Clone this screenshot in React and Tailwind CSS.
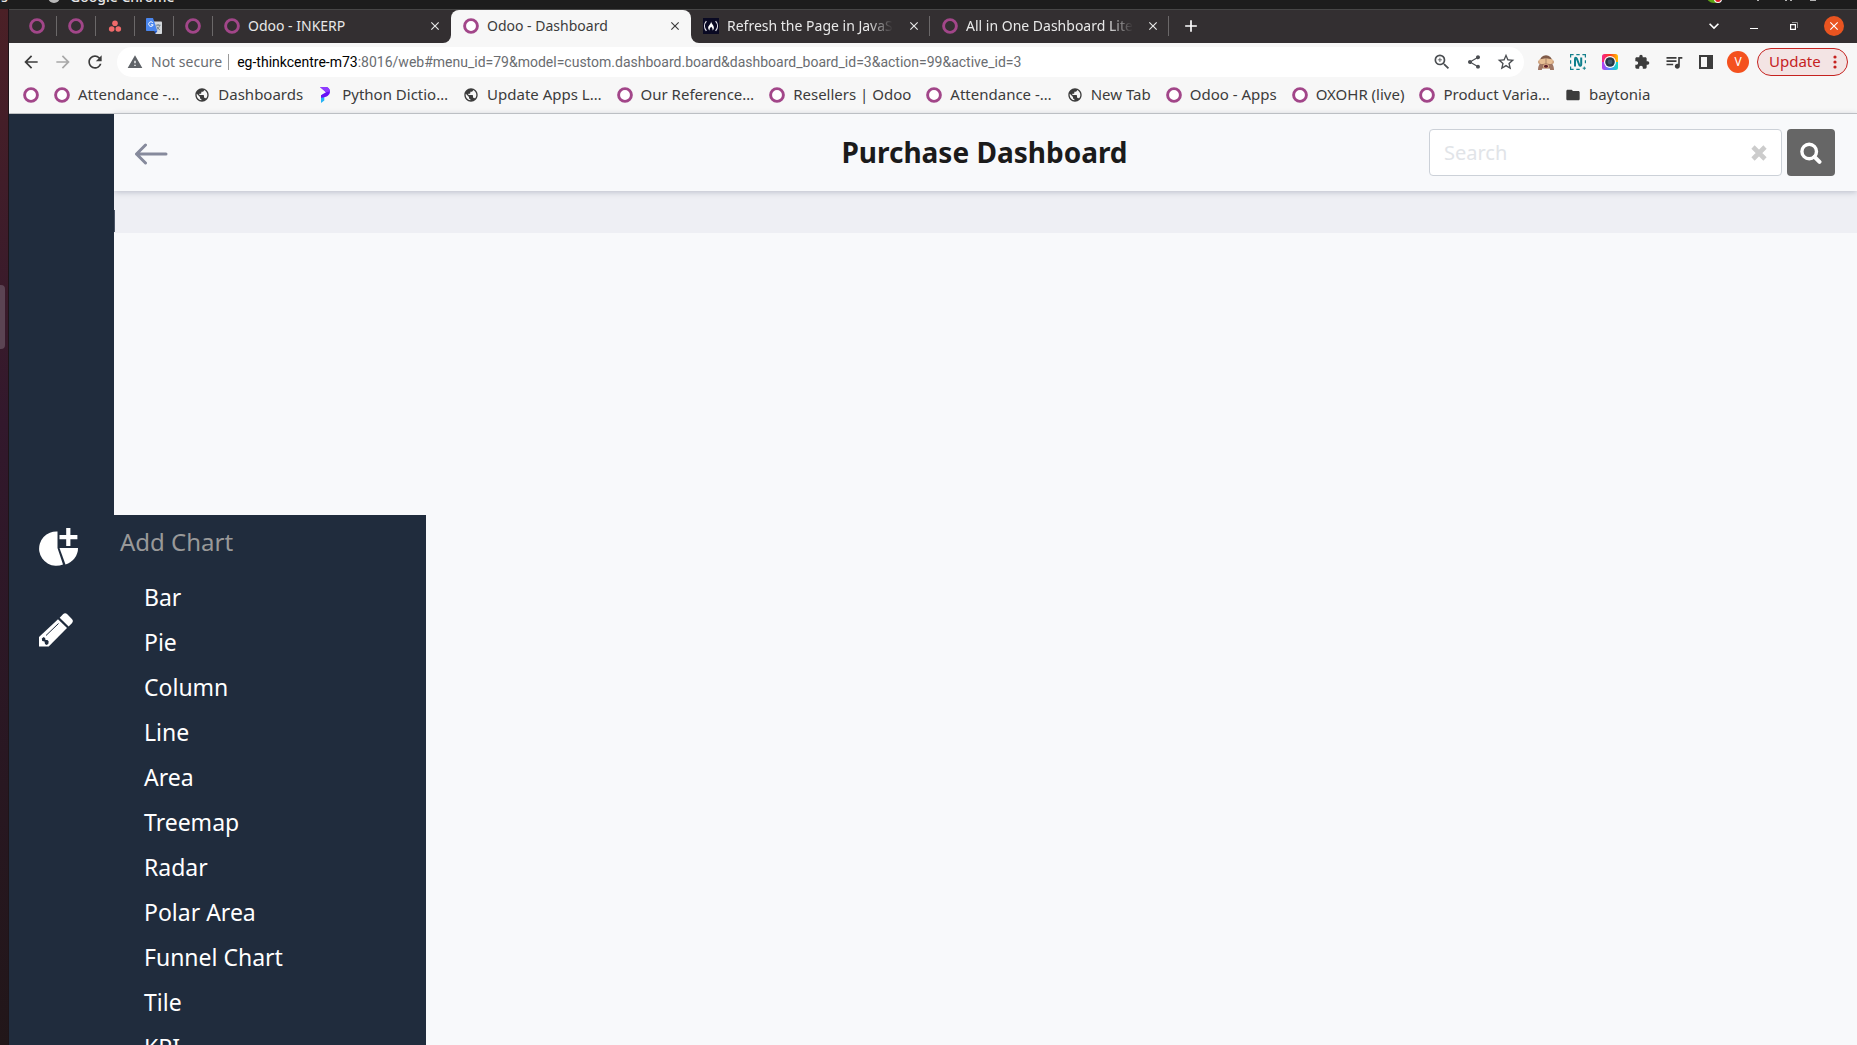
import { MdFolder, MdPublic, MdExtension, MdQueueMusic, MdShare, MdStarBorder, MdZoomIn, MdRefresh, MdArrowBack, MdArrowForward, MdWarning, MdAdd, MdClose, MdExpandMore } from "react-icons/md";

function Ring({ dark }) {
  return (
    <svg viewBox="0 0 16 16" className="size-4 shrink-0" aria-hidden="true">
      <circle cx="8" cy="8" r="6.4" fill={dark ? "none" : "#fff"} stroke="#a24689" strokeWidth="2.9" />
    </svg>
  );
}

function Asana() {
  return (
    <svg viewBox="0 0 16 16" className="size-4 shrink-0" aria-hidden="true">
      <g fill="#f06a6a">
        <circle cx="8" cy="5.2" r="2.8" />
        <circle cx="4.7" cy="11" r="2.8" />
        <circle cx="11.3" cy="11" r="2.8" />
      </g>
    </svg>
  );
}

function Translate() {
  return (
    <svg viewBox="0 0 16 16" className="size-4 shrink-0" aria-hidden="true">
      <path d="M6 3.5h9.200c.5 0 .8.3.8.8v10.900c0 .5-.3.8-.8.8H9.500z" fill="#d5d8dc" />
      <path d="M9.600 7.200h5M12.100 6v1.200M13.700 7.200c-.4 2-1.600 3.500-3.200 4.600M10.800 8.600c.6 1.400 1.700 2.500 3 3.200" stroke="#6b7a83" strokeWidth=".9" fill="none" />
      <path d="M.8 0H7l4.400 13H.8C.3 13 0 12.700 0 12.200V.8C0 .3.300 0 .8 0z" fill="#4a86ee" />
      <path d="M8.300 13h3.100l-2 2.800z" fill="#2456c4" />
      <path d="M6.900 4.800A2.300 2.300 0 1 0 7.200 6.800H4.900" stroke="#fff" strokeWidth="1" fill="none" />
    </svg>
  );
}

function CodeCamp() {
  return (
    <svg viewBox="0 0 16 16" className="size-4 shrink-0" aria-hidden="true">
      <rect width="16" height="16" fill="#0a0a23" />
      <path d="M3.400 3.200C.9 6 .9 10 3.400 12.800M12.600 3.200c2.500 2.800 2.500 6.800 0 9.600" stroke="#e4e4ec" strokeWidth="1.2" fill="none" />
      <path d="M8 3.600c.3 2.400 2.900 3.400 2.900 6.200 0 1.500-.7 2.300-1.500 2.700.5-1.200.2-2.300-1.200-3.700-1.600 1.300-2 2.500-1.300 3.700-1-.5-1.700-1.400-1.700-2.800C5.200 7.600 8.200 6.200 8 3.600z" fill="#fff" />
    </svg>
  );
}

function Programiz() {
  return (
    <svg viewBox="0 0 16 16" className="size-4 shrink-0" aria-hidden="true">
      <path d="M3 8.500 6.300 6.500V13.500L3 16z" fill="#25b3f5" />
      <path d="M2 0h6.500c1.800.3 3.300 2 3.500 4.500-.2 3.500-2.500 5.700-9 6.300V8.200l5-3z" fill="#6a11f5" />
      <path d="M2 0h6.500c1.800.3 3.300 2 3.500 4.500L8 5.200z" fill="#8f3cff" />
    </svg>
  );
}

function Globe() {
  return <MdPublic className="size-4 shrink-0 text-[#3c3c3c]" aria-hidden="true" />;
}

function Monkey() {
  return (
    <svg viewBox="0 0 16 16" className="size-4" aria-hidden="true">
      <circle cx="8" cy="7.5" r="6.2" fill="#7f5a48" />
      <circle cx="1.9" cy="8" r="1.9" fill="#c79a76" />
      <circle cx="14.1" cy="8" r="1.9" fill="#c79a76" />
      <path d="M3 9h10l.6 5.500H2.400z" fill="#9a6f5b" />
      <path d="M1 5.500 7.700 4.200v5.300L2 10.500zM15 5.500 8.300 4.200v5.300l5.700 1z" fill="#e6bd93" />
      <path d="M0 16c0-3 .8-5 2-6.500l3 1.500-1.200 5zM16 16c0-3-.8-5-2-6.500L11 11l1.200 5z" fill="#9f7664" />
      <ellipse cx="8" cy="12.2" rx="3" ry="2.3" fill="#dcae88" />
      <ellipse cx="8" cy="12.2" rx="2" ry="1.5" fill="#5c1d28" />
    </svg>
  );
}

function NimbusN() {
  return (
    <svg viewBox="0 0 16 16" className="size-4" aria-hidden="true">
      <path d="M.6 3.600V.6h3M6.300.6h3.400M12.400.6h3v3M15.400 6.300v3M.6 6.300v3.400M.6 12.400v3h3M6.300 15.400h3.400" stroke="#14808c" strokeWidth="1.2" fill="none" />
      <path d="M5 12.500V5c0-1.500 1.300-1.500 1.900-.2l2.400 6.200c.6 1.300 1.900 1 1.900-.4V3.500" stroke="#0e7f8c" strokeWidth="2" fill="none" strokeLinejoin="round" />
      <path d="M14.300 12.600v3.200M12.700 14.200h3.200" stroke="#14808c" strokeWidth="1" />
    </svg>
  );
}

function Camera() {
  return (
    <svg viewBox="0 0 16 16" className="size-4" aria-hidden="true">
      <defs>
        <linearGradient id="camA" x1="0" y1="0" x2="1" y2="0">
          <stop offset="0" stopColor="#f5268c" />
          <stop offset=".5" stopColor="#ff3a1f" />
          <stop offset="1" stopColor="#ffc400" />
        </linearGradient>
        <linearGradient id="camB" x1="0" y1="0" x2="1" y2="0">
          <stop offset="0" stopColor="#c03cf0" />
          <stop offset=".5" stopColor="#4f8cff" />
          <stop offset="1" stopColor="#14e0c0" />
        </linearGradient>
      </defs>
      <path d="M0 8V2.500A2.500 2.500 0 0 1 2.500 0h11A2.500 2.500 0 0 1 16 2.500V8z" fill="url(#camA)" />
      <path d="M0 8h16v5.500a2.500 2.500 0 0 1-2.500 2.500h-11A2.500 2.500 0 0 1 0 13.500z" fill="url(#camB)" />
      <circle cx="8" cy="8" r="6" fill="#fff" />
      <circle cx="8" cy="8" r="4.8" fill="#263645" />
      <circle cx="8" cy="8" r="2.4" fill="#40576b" />
    </svg>
  );
}

function SidePanel() {
  return (
    <svg viewBox="0 0 16 16" className="size-4" aria-hidden="true">
      <path d="M1 1h14v14H1zM3 3v10h6V3z" fill="#3c3c3c" fillRule="evenodd" />
    </svg>
  );
}

function PieAdd() {
  return (
    <svg viewBox="0 0 40 38" className="h-[38px] w-10" aria-hidden="true">
      <g fill="#fff">
        <path d="M18.500 3.500A17.200 17.200 0 1 0 24 36.500L18.500 20z" />
        <path d="M20.500 20h18.500a17 17 0 0 1-12.500 16.500z" />
        <path d="M27.200 0h4.200v7h7v4.200h-7V18h-4.200v-6.800h-6.700V7h6.700z" />
      </g>
    </svg>
  );
}

function Pencil() {
  return (
    <svg viewBox="0 0 34 34" className="size-[34px]" aria-hidden="true">
      <path d="M19 6.200 28 15 9.700 33.500H0V24z" fill="#fff" />
      <path d="M20.700 4.700 24 1.300c1.300-1.300 3-1.300 4.300 0l4.600 4.600c1.300 1.300 1.300 3 0 4.300l-3.300 3.400z" fill="#fff" />
      <path d="M7 22.500 19.500 10.500" stroke="#202c3d" strokeWidth="1" />
      <path d="M2.800 25.500l2-1.500 1.400 1.300.3 1.700h2l1.200 1.500-.4 2.500-1.800 1-1.500-1-.5-2.500-2.300-.5z" fill="#202c3d" />
    </svg>
  );
}

const pinned = [
  ["Odoo one", <Ring dark />],
  ["Odoo two", <Ring dark />],
  ["Asana", <Asana />],
  ["Translate", <Translate />],
  ["Odoo three", <Ring dark />],
];

const bookmarks = [
  [<Ring />, ""],
  [<Ring />, "Attendance -…"],
  [<Globe />, "Dashboards"],
  [<Programiz />, "Python Dictio…"],
  [<Globe />, "Update Apps L…"],
  [<Ring />, "Our Reference…"],
  [<Ring />, "Resellers | Odoo"],
  [<Ring />, "Attendance -…"],
  [<Globe />, "New Tab"],
  [<Ring />, "Odoo - Apps"],
  [<Ring />, "OXOHR (live)"],
  [<Ring />, "Product Varia…"],
  [<MdFolder className="size-4 shrink-0 text-[#3c3c3c]" aria-hidden="true" />, "baytonia"],
];

const charts = ["Bar", "Pie", "Column", "Line", "Area", "Treemap", "Radar", "Polar Area", "Funnel Chart", "Tile", "KPI"];

function Tab({ icon, title, active, divider, fade }) {
  return (
    <div className={active ? "relative flex w-60 items-center rounded-t-lg bg-[#f7f7f7] pr-2 pb-px pl-3 text-[#3c3c3c]" : "relative flex w-[239px] items-center pr-2 pb-px pl-3 text-[#e8e8e8]"}>
      {active && (
        <>
          <span className="absolute bottom-0 -left-2 size-2 bg-[#f7f7f7]"><span className="block size-2 rounded-br-lg bg-[#332f31]" /></span>
          <span className="absolute -right-2 bottom-0 size-2 bg-[#f7f7f7]"><span className="block size-2 rounded-bl-lg bg-[#332f31]" /></span>
        </>
      )}
      <button className="flex min-w-0 flex-1 items-center gap-2 text-left">
        {icon}
        <span className={fade ? "mask-r-from-85% whitespace-nowrap" : "whitespace-nowrap"}>{title}</span>
      </button>
      <button aria-label={"Close " + title} className="grid size-4 place-items-center"><MdClose className="size-3.5" /></button>
      {divider && <span className="absolute top-[6px] right-0 h-5 w-px bg-[#6b6869]" />}
    </div>
  );
}

function Browser() {
  return (
    <header className="shrink-0 text-sm text-[#3c3c3c]">
      <div className="flex h-[34px] border-t border-[#474747] bg-[#332f31]">
        <div className="flex pb-px pl-2">
          {pinned.map(([name, icon]) => (
            <div key={name} className="flex w-10 items-center justify-between pl-3 not-first:-ml-px">
              <button aria-label={name}>{icon}</button>
              <span className="h-5 w-px bg-[#6b6869]" />
            </div>
          ))}
        </div>
        <div className="-ml-px flex">
          <Tab icon={<Ring dark />} title="Odoo - INKERP" />
          <Tab icon={<Ring />} title="Odoo - Dashboard" active />
          <Tab icon={<CodeCamp />} title="Refresh the Page in JavaS" divider fade />
          <Tab icon={<Ring dark />} title="All in One Dashboard Lite" divider fade />
        </div>
        <button aria-label="New tab" className="ml-3 pb-px text-white"><MdAdd className="size-5" /></button>
        <div className="ml-auto flex items-center gap-5 pr-[13px] pb-px text-white">
          <button aria-label="Search tabs"><MdExpandMore className="size-5" /></button>
          <button aria-label="Minimize" className="grid size-5 place-items-center pt-1"><span className="h-px w-2 bg-white" /></button>
          <button aria-label="Restore" className="grid size-5 place-items-center">
            <svg viewBox="0 0 8 8" className="size-2"><path d="M.6 2.600h4.800v4.800H.6z" fill="none" stroke="#fff" strokeWidth="1.2" /><path d="M2 .5h5.500V6" fill="none" stroke="#999" /></svg>
          </button>
          <button aria-label="Close window" className="grid size-5 place-items-center rounded-full bg-[#e95420]"><MdClose className="size-3.5" /></button>
        </div>
      </div>
      <div className="flex h-[38px] items-center bg-[#f7f7f7] pr-[9px] pl-3">
        <div className="flex gap-3 pr-3">
          <button aria-label="Back"><MdArrowBack className="size-5" /></button>
          <button aria-label="Forward" className="text-[#a8a8a8]"><MdArrowForward className="size-5" /></button>
          <button aria-label="Reload"><MdRefresh className="size-5" /></button>
        </div>
        <div className="flex h-[30px] flex-1 items-center rounded-full bg-white pr-2 pl-2.5">
          <MdWarning className="size-4 text-[#5f6368]" />
          <span className="ml-2 text-[#6a6d71]">Not secure</span>
          <span className="ml-1.5 h-4 w-px bg-[#9a9a9a]" />
          <span className="flex-1 pl-2 font-['Roboto'] text-[#6a6d71]"><span className="text-black">eg-thinkcentre-m73</span>:8016/web#menu_id=79&amp;model=custom.dashboard.board&amp;dashboard_board_id=3&amp;action=99&amp;active_id=3</span>
          <div className="flex gap-3 text-[#4a4d51]">
            <button aria-label="Zoom"><MdZoomIn className="size-5" /></button>
            <button aria-label="Share" className="grid size-5 place-items-center"><MdShare className="size-4" /></button>
            <button aria-label="Bookmark"><MdStarBorder className="size-5" /></button>
          </div>
        </div>
        <div className="flex gap-3 pl-3 *:grid *:size-5 *:place-items-center">
          <button aria-label="Monkey extension"><Monkey /></button>
          <button aria-label="Clipper extension"><NimbusN /></button>
          <button aria-label="Camera extension"><Camera /></button>
          <button aria-label="Extensions"><MdExtension className="size-4" /></button>
          <button aria-label="Media"><MdQueueMusic className="size-5" /></button>
          <button aria-label="Side panel"><SidePanel /></button>
        </div>
        <button aria-label="Profile" className="ml-[11px] grid size-[22px] place-items-center rounded-full bg-[#f4511e] text-xs text-white">V</button>
        <button className="ml-2 flex h-7 w-[91px] items-center justify-between rounded-full border border-[#c5221f] bg-[#f3e4e4] pr-2.5 pl-[11px] text-[15px] text-[#c5221f]">
          Update
          <svg viewBox="0 0 4 14" className="h-3.5 w-1"><g fill="#c5221f"><circle cx="2" cy="2" r="1.6" /><circle cx="2" cy="7" r="1.6" /><circle cx="2" cy="12" r="1.6" /></g></svg>
        </button>
      </div>
      <nav className="flex h-[33px] items-center gap-[15px] border-b border-[#bfc1c3] bg-[#f7f7f7] pb-1 pl-3.5 text-[15px]">
        {bookmarks.map(([icon, label], i) => (
          <a key={i} href="#" aria-label={label || "Odoo"} className="flex items-center gap-2 whitespace-nowrap">
            {icon}
            {label && <span>{label}</span>}
          </a>
        ))}
      </nav>
    </header>
  );
}

export default function App() {
  return (
    <div className="flex h-screen flex-col overflow-hidden font-['Noto_Sans','Open_Sans',sans-serif]">
      <div className="flex h-[9px] shrink-0 items-end overflow-hidden bg-[#1d1d1d] text-sm leading-6 font-medium text-[#e6e6e6]">
        <span className="w-12 pl-px">s</span>
        <span className="mb-1.5 size-3 rounded-full bg-[#b8b8b8]" />
        <span className="ml-2.5">Google Chrome</span>
        <svg viewBox="0 0 110 9" className="mr-10 ml-auto h-[9px] w-[110px]" aria-hidden="true">
          <circle cx="7" cy="-5" r="8" fill="#5fa514" />
          <circle cx="11" cy="-1" r="4" fill="#fff" />
          <circle cx="11" cy="-1" r="3" fill="#e01b24" />
          <path d="M51 0v1M79 0v1M84 0v1M103 0h6" stroke="#e6e6e6" strokeWidth="1.5" />
        </svg>
      </div>
      <div className="flex min-h-0 flex-1">
        <div className="flex w-[9px] shrink-0 flex-col border-r border-[#1d1418] bg-linear-to-b from-[#4b2026] via-[#32182c] via-40% to-[#211619] pt-[276px]">
          <span className="h-16 w-[5px] rounded-r bg-[#5b4453]" />
        </div>
        <div className="flex min-w-0 flex-1 flex-col">
          <Browser />
          <div className="flex min-h-0 flex-1 bg-[#f8f9fb]">
            <aside className="relative z-20 flex w-[105px] shrink-0 flex-col bg-[#202c3d] pt-[414px] pl-[30px]">
              <button aria-label="Add chart" className="self-start"><PieAdd /></button>
              <button aria-label="Edit" className="mt-[47px] self-start"><Pencil /></button>
              <div className="absolute top-[401px] left-full w-[312px] bg-[#202c3d] pl-1.5 text-white">
                <h2 className="flex h-[60px] items-center pb-1.5 text-2xl text-[#999]">Add Chart</h2>
                <ul className="pl-6 text-[23px]">
                  {charts.map((name) => (
                    <li key={name}><button className="flex h-[45px] items-center">{name}</button></li>
                  ))}
                </ul>
              </div>
            </aside>
            <main className="flex min-w-0 flex-1 flex-col">
              <div className="relative z-10 grid h-[77px] shrink-0 grid-cols-[1fr_auto_1fr] items-center bg-[#f8f9fb] pr-[22px] pl-5 shadow-[0_1px_6px_#b9bcc8]">
                <button aria-label="Go back" className="justify-self-start pt-0.5">
                  <svg viewBox="0 0 34 22" className="h-[22px] w-[34px]" fill="none" stroke="#868a9c" strokeWidth="3" strokeLinecap="round" strokeLinejoin="round"><path d="M32 11H2.500M11.500 2l-9 9 9 9" /></svg>
                </button>
                <h1 className="pb-0.5 text-[28px] font-bold text-[#1b1b1b]">Purchase Dashboard</h1>
                <form className="flex gap-[5px] justify-self-end" onSubmit={(e) => e.preventDefault()}>
                  <div className="flex h-[47px] w-[353px] items-center rounded-sm border border-[#ccd1d8] bg-white px-3.5">
                    <input aria-label="Search" placeholder="Search" className="min-w-0 flex-1 text-xl outline-none placeholder:text-[#e1e4e8]" />
                    <button type="button" aria-label="Clear">
                      <svg viewBox="0 0 16 16" className="size-4" stroke="#ccc" strokeWidth="4.6"><path d="M2 2l12 12M14 2 2 14" /></svg>
                    </button>
                  </div>
                  <button aria-label="Submit search" className="grid h-[47px] w-12 place-items-center rounded-sm bg-[#666]">
                    <svg viewBox="0 0 22 22" className="size-[22px]" fill="none" stroke="#fff"><circle cx="9.2" cy="9.5" r="7.3" strokeWidth="3.4" /><path d="M14.500 14.800l5 5" strokeWidth="4" strokeLinecap="round" /></svg>
                  </button>
                </form>
              </div>
              <div className="flex h-[42px] shrink-0 items-end bg-[#eeeff4] pb-px"><span className="h-[22px] w-px bg-[#4b5566]" /></div>
            </main>
          </div>
        </div>
      </div>
    </div>
  );
}
